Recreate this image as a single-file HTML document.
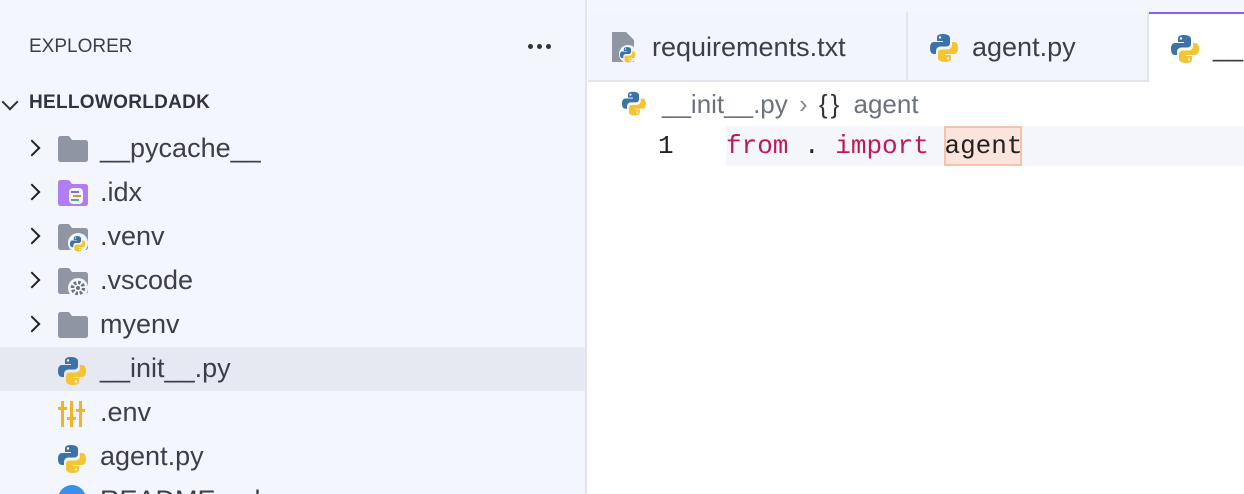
<!DOCTYPE html>
<html><head><meta charset="utf-8"><style>
*{margin:0;padding:0;box-sizing:border-box}
body{width:1244px;height:494px;overflow:hidden;background:#fff;font-family:"Liberation Sans",sans-serif;position:relative}
.side{position:absolute;left:0;top:0;width:587px;height:494px;background:#f3f6fd;border-right:2px solid #e2e5ec;overflow:hidden}
.abs{position:absolute}
.t{color:#3a3f4b;font-size:27px;white-space:nowrap}
.row{position:absolute;left:0;width:585px;height:44px}
.chev{position:absolute;left:26px;top:15px;width:12px;height:12px;border-right:2px solid #222;border-bottom:2px solid #222;transform:rotate(-45deg)}
.ic{position:absolute;left:58px;top:8px}
.lbl{position:absolute;left:100px;top:6px;font-size:27px;color:#3a3f4b;white-space:nowrap}
.tabs{position:absolute;left:588px;top:12px;width:656px;height:70px;background:#f2f5fc;border-bottom:2px solid #e2e5ec}
.tab{position:absolute;top:0;height:69px;border-right:2px solid #e2e5ec}
.mono{font-family:"Liberation Mono",monospace;font-size:26px}
</style></head><body>
<svg width="0" height="0" style="position:absolute"><defs>
<g id="py"><path d="M13 2c-6 0-6 2.5-6 4v3h6v1H4c-2.5 0-4 2-4 6s1.5 6 4 6h2v-3c0-2.5 2-4.5 4.5-4.5h6c2 0 3.5-1.5 3.5-3.5V6c0-2-2-4-7-4z" fill="#3b73a8"/><circle cx="10" cy="5.5" r="1.2" fill="#fff"/><path d="M15 30c6 0 6-2.5 6-4v-3h-6v-1h9c2.5 0 4-2 4-6s-1.5-6-4-6h-2v3c0 2.5-2 4.5-4.5 4.5h-6c-2 0-3.5 1.5-3.5 3.5V26c0 2 2 4 7 4z" fill="#f6c431"/><circle cx="18" cy="26.5" r="1.2" fill="#fff"/></g>
<path id="fold" d="M0 4c0-2 1-3 3-3h8l3 4h13c2 0 3 1 3 3v16c0 2-1 3-3 3H3c-2 0-3-1-3-3z" fill="#8f95a3"/>
</defs></svg>
<div class="side">
<div class="abs t" style="left:29px;top:36px;font-size:19px">EXPLORER</div>
<div class="abs" style="left:528px;top:44px;width:5px;height:5px;border-radius:50%;background:#333;box-shadow:9px 0 0 #333,18px 0 0 #333"></div>
<div class="abs" style="left:4px;top:96px;width:12px;height:12px;border-right:2px solid #333;border-bottom:2px solid #333;transform:rotate(45deg)"></div>
<div class="abs t" style="left:29px;top:92px;font-size:19px;font-weight:bold;color:#2f3440;letter-spacing:.3px">HELLOWORLDADK</div>
<div class="row" style="top:127px"><div class="chev"></div><svg class="ic" width="30" height="28"><use href="#fold"/></svg><div class="lbl">__pycache__</div></div>
<div class="row" style="top:171px"><div class="chev"></div><svg class="ic" width="30" height="30"><path d="M0 4c0-2 1-3 3-3h8l3 4h13c2 0 3 1 3 3v16c0 2-1 3-3 3H3c-2 0-3-1-3-3z" fill="#b07ef0"/><rect x="11" y="9" width="14" height="16" rx="4" fill="#f3f6fd"/><rect x="13" y="12" width="8" height="2" fill="#7a6cf0"/><rect x="15" y="16" width="8" height="2" fill="#e8883a"/><rect x="13" y="20" width="8" height="2" fill="#4bb36a"/></svg><div class="lbl">.idx</div></div>
<div class="row" style="top:215px"><div class="chev"></div><svg class="ic" width="30" height="30"><use href="#fold"/><circle cx="20" cy="20" r="10" fill="#f3f6fd"/><g transform="translate(12,12) scale(.55)"><use href="#py"/></g></svg><div class="lbl">.venv</div></div>
<div class="row" style="top:259px"><div class="chev"></div><svg class="ic" width="30" height="30"><use href="#fold"/><circle cx="20" cy="21" r="10" fill="#f3f6fd"/><circle cx="20" cy="21" r="5.5" fill="none" stroke="#6d7380" stroke-width="3.5" stroke-dasharray="2.5 1.8"/><circle cx="20" cy="21" r="2" fill="#6d7380"/></svg><div class="lbl">.vscode</div></div>
<div class="row" style="top:303px"><div class="chev"></div><svg class="ic" width="30" height="28"><use href="#fold"/></svg><div class="lbl">myenv</div></div>
<div class="row" style="top:347px;background:#e6e9f1"><svg class="ic" width="28" height="32"><use href="#py"/></svg><div class="lbl">__init__.py</div></div>
<div class="row" style="top:391px"><svg class="ic" width="28" height="30"><g fill="#f0b429"><rect x="3" y="2" width="3" height="26"/><rect x="12" y="2" width="3" height="26"/><rect x="21" y="2" width="3" height="26"/><rect x="0" y="8" width="9" height="3"/><rect x="9" y="18" width="9" height="3"/><rect x="18" y="10" width="9" height="3"/></g></svg><div class="lbl">.env</div></div>
<div class="row" style="top:435px"><svg class="ic" width="28" height="32"><use href="#py"/></svg><div class="lbl">agent.py</div></div>
<div class="row" style="top:479px;height:15px;overflow:hidden"><div class="abs" style="left:58px;top:6px;width:28px;height:28px;border-radius:50%;background:#3b8fe8"></div><div class="lbl">README.md</div></div>
</div>
<div class="abs" style="left:588px;top:0;width:656px;height:12px;background:#f3f6fd"></div>
<div class="tabs">
<div class="tab" style="left:0;width:320px"><svg class="abs" style="left:22px;top:20px" width="30" height="32"><path d="M2 0h14l8 8v22H2z" fill="#8f95a3"/><circle cx="18" cy="22" r="9" fill="#f2f5fc"/><g transform="translate(10,14) scale(.55)"><use href="#py"/></g></svg><div class="abs t" style="left:64px;top:20px">requirements.txt</div></div>
<div class="tab" style="left:320px;width:241px"><svg class="abs" style="left:22px;top:20px" width="28" height="32"><use href="#py"/></svg><div class="abs t" style="left:64px;top:20px">agent.py</div></div>
<div class="abs" style="left:561px;top:0;width:95px;height:71px;background:#fff;border-top:2px solid #8b5cf6"><svg class="abs" style="left:22px;top:19px" width="28" height="32"><use href="#py"/></svg><div class="abs t" style="left:64px;top:18px">__i</div></div>
</div>
<svg class="abs" style="left:622px;top:90px" width="26" height="30"><g transform="scale(.85)"><use href="#py"/></g></svg>
<div class="abs t" style="left:662px;top:89px;color:#6b7180;font-size:26px;word-spacing:4px">__init__.py <span style="color:#888">›</span> <span style="color:#333;letter-spacing:3px">{}</span> agent</div>
<div class="abs" style="left:726px;top:126px;width:518px;height:40px;background:#f4f6fb"></div>
<div class="abs mono" style="left:658px;top:131px;color:#222">1</div>
<div class="abs" style="left:944px;top:126px;width:78px;height:40px;background:#fbe4db;border:2px solid #f5c4a8"></div>
<div class="abs mono" style="left:726px;top:131px;color:#222;white-space:pre"><span style="color:#c2185b">from</span> . <span style="color:#c2185b">import</span> agent</div>
</body></html>
